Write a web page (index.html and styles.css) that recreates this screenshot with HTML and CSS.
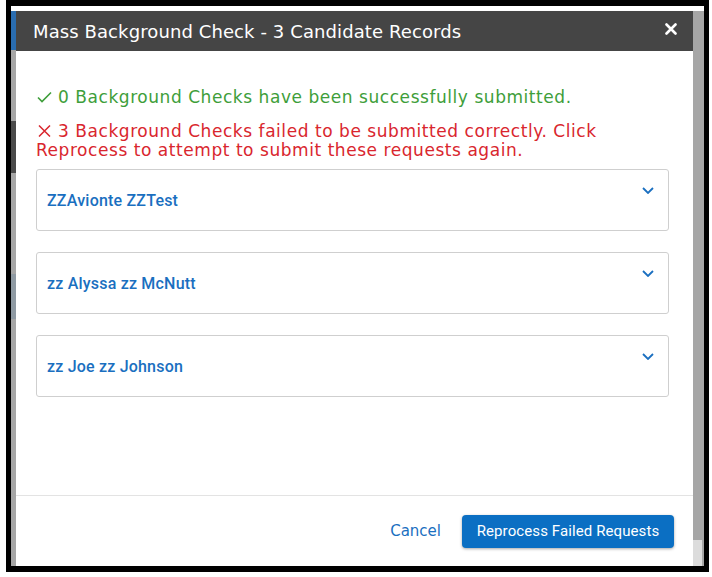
FILE: index.html
```html
<!DOCTYPE html>
<html lang="en">

<head>
    <meta charset="UTF-8">
    <meta name="viewport" content="width=device-width, initial-scale=1.0">
    <title>Mass Background Check</title>
    <link rel="stylesheet" href="styles.css">
</head>

<body>
    <div class="frame">
        <div class="top-strip"></div>
        <div class="backdrop">
            <!-- bits of the page behind the overlay -->
            <div class="behind-left">
                <span class="behind-blue"></span>
                <span class="behind-dark"></span>
                <span class="behind-slate"></span>
            </div>

            <div class="modal">
                <div class="modal-header">
                    <h1 class="modal-title">Mass Background Check - 3 Candidate Records</h1>
                    <button class="close-btn" aria-label="Close">
                        <svg width="12" height="12" viewBox="0 0 12 12">
                            <path d="M1.5 1.5 L10.5 10.5 M10.5 1.5 L1.5 10.5" stroke="#fff" stroke-width="2.6" stroke-linecap="round"/>
                        </svg>
                    </button>
                </div>

                <div class="modal-body">
                    <p class="msg msg-success">
                        <svg class="msg-icon" width="15" height="12" viewBox="0 0 15 12">
                            <polyline points="1,6.5 5,10.5 14,1.5" fill="none" stroke="#3e9e3a" stroke-width="1.6"/>
                        </svg>0 Background Checks have been successfully submitted.
                    </p>
                    <p class="msg msg-error">
                        <svg class="msg-icon" width="15" height="12" viewBox="0 0 15 12">
                            <path d="M2 0.5 L13 11.5 M13 0.5 L2 11.5" stroke="#d9262e" stroke-width="1.5"/>
                        </svg>3 Background Checks failed to be submitted correctly. Click Reprocess to attempt to submit these requests again.
                    </p>

                    <div class="candidate-list">
                        <div class="candidate">
                            <span class="candidate-name">ZZAvionte ZZTest</span>
                            <svg class="chevron" width="12" height="7" viewBox="0 0 12 7">
                                <polyline points="1,1 6,6 11,1" fill="none" stroke="#1a6fc0" stroke-width="1.8"/>
                            </svg>
                        </div>
                        <div class="candidate">
                            <span class="candidate-name">zz Alyssa zz McNutt</span>
                            <svg class="chevron" width="12" height="7" viewBox="0 0 12 7">
                                <polyline points="1,1 6,6 11,1" fill="none" stroke="#1a6fc0" stroke-width="1.8"/>
                            </svg>
                        </div>
                        <div class="candidate">
                            <span class="candidate-name">zz Joe zz Johnson</span>
                            <svg class="chevron" width="12" height="7" viewBox="0 0 12 7">
                                <polyline points="1,1 6,6 11,1" fill="none" stroke="#1a6fc0" stroke-width="1.8"/>
                            </svg>
                        </div>
                    </div>
                </div>

                <div class="modal-footer">
                    <button class="btn-link">Cancel</button>
                    <button class="btn-primary">Reprocess Failed Requests</button>
                </div>
            </div>

            <div class="behind-right">
                <span class="behind-light"></span>
            </div>
        </div>
    </div>
</body>

</html>
```

FILE: styles.css
```css
* {
    margin: 0;
    padding: 0;
    box-sizing: border-box;
}

body {
    background: #fff;
    font-family: "DejaVu Sans", "Open Sans", sans-serif;
}

.frame {
    margin-left: 6px;
    width: 703px;
    height: 572px;
    border: solid #000;
    border-width: 6px 5px 6px 5px;
    display: flex;
    flex-direction: column;
    background: #fff;
}

.top-strip {
    height: 5px;
    background: #fff;
}

.backdrop {
    flex: 1;
    display: flex;
    background: #a6a6a6;
}

.behind-left {
    width: 5px;
    display: flex;
    flex-direction: column;
}

.behind-blue {
    height: 39px;
    background: #2a6db0;
}

.behind-dark {
    height: 52px;
    margin-top: 71px;
    background: #4a4a4a;
}

.behind-slate {
    height: 45px;
    margin-top: 101px;
    background: #8f9aa3;
}

.behind-right {
    width: 11px;
    display: flex;
    flex-direction: column;
    justify-content: flex-end;
}

.behind-light {
    height: 26px;
    margin-right: 2px;
    background: #dcdcdc;
}

.modal {
    width: 677px;
    background: #fff;
    display: flex;
    flex-direction: column;
}

.modal-header {
    height: 40px;
    background: #454545;
    display: flex;
    align-items: center;
    justify-content: space-between;
    padding: 0 16px 0 17px;
}

.modal-title {
    color: #fff;
    font-size: 18px;
    font-weight: 400;
    letter-spacing: 0.1px;
}

.close-btn {
    border: none;
    background: none;
    display: flex;
    margin-top: -4px;
}

.modal-body {
    flex: 1;
    padding: 37px 24px 0 20px;
}

.msg {
    font-size: 17px;
    line-height: 19px;
    letter-spacing: 0.55px;
}

.msg-icon {
    margin: 0 6px 0 1px;
}

.msg-success {
    color: #3e9e3a;
}

.msg-error {
    color: #d9262e;
    margin-top: 15px;
}

.candidate-list {
    margin-top: 9px;
    display: flex;
    flex-direction: column;
    gap: 21px;
}

.candidate {
    height: 62px;
    border: 1px solid #cfcfcf;
    border-radius: 3px;
    display: flex;
    justify-content: space-between;
    align-items: center;
    padding: 0 14px 0 10px;
}

.candidate-name {
    font-family: Roboto, "Liberation Sans", sans-serif;
    font-size: 16px;
    font-weight: 500;
    letter-spacing: 0.2px;
    color: #1a6fc0;
}

.chevron {
    align-self: flex-start;
    margin-top: 17px;
}

.modal-footer {
    height: 71px;
    border-top: 1px solid #e3e3e3;
    display: flex;
    justify-content: flex-end;
    align-items: center;
    gap: 21px;
    padding: 0 19px 0 0;
}

.btn-link {
    border: none;
    background: none;
    color: #1a6fc0;
    font-family: "DejaVu Sans", "Open Sans", sans-serif;
    font-size: 15px;
}

.btn-primary {
    width: 212px;
    height: 33px;
    border: none;
    border-radius: 4px;
    background: #0b6fc3;
    color: #fff;
    font-family: Roboto, "Liberation Sans", sans-serif;
    font-size: 15px;
    letter-spacing: 0.1px;
    box-shadow: 0 1px 3px rgba(0, 0, 0, 0.35);
}
```
